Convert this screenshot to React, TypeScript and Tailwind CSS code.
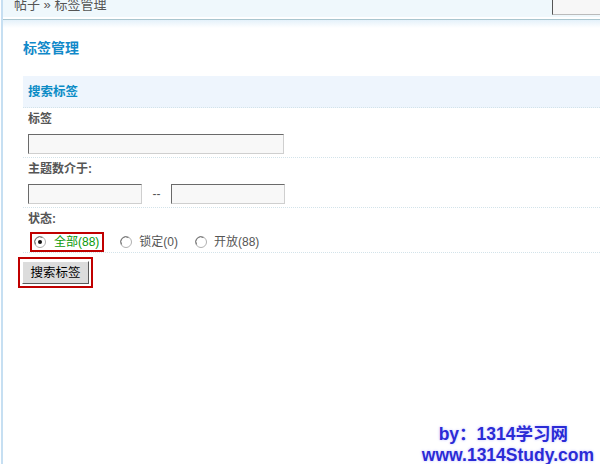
const Radio = ({ checked }: { checked?: boolean }) => (
  <svg width="12" height="12" viewBox="0 0 12 12" className="shrink-0">
    <circle cx="6" cy="6" r="5.5" fill="#fff" stroke="#b0b0b0" />
    <path d="M1.6 8.5 A5 5 0 0 1 8.5 1.6" fill="none" stroke="#707070" strokeWidth="1" />
    {checked && <circle cx="6" cy="6" r="2" fill="#111" />}
  </svg>
);

const inputCls =
  "h-[20px] bg-[#f8f8f8] border border-t-[#6a6a6a] border-l-[#6a6a6a] border-b-[#cfcfcf] border-r-[#cfcfcf] outline-none";

export default function App() {
  return (
    <div
      className="relative flex h-[464px] w-[600px] overflow-hidden bg-white text-[12px] leading-4 text-[#555]"
      style={{ fontFamily: '"Liberation Sans", "Noto Sans CJK SC", sans-serif' }}
    >
      <div className="w-px shrink-0" />
      <div className="w-[2px] shrink-0 bg-[#c6dff2]" />

      <div className="flex min-w-0 flex-1 flex-col">
        {/* top bar */}
        <div className="flex h-[17px] items-start justify-between bg-[#eff8fc]">
          <span className="-mt-[3px] ml-[11px] text-[13px] text-[#555]">帖子 » 标签管理</span>
          <div className="h-[15px] w-[48px] border-l border-b border-l-[#555] border-b-[#bbb] bg-[#f7f7f7]" />
        </div>
        <div className="h-[2px] bg-white" />
        <div className="h-px bg-[#a9c6cf]" />
        <div className="h-[8px] bg-gradient-to-b from-[#e4f1fa] to-white" />

        <div className="pl-[20px]">
          <h1 className="mt-[10px] text-[14px] font-bold leading-5 text-[#1189c9]">标签管理</h1>

          <div className="mt-[18px] flex h-[32px] items-center border-b border-dotted border-[#d3e3ea] bg-[#eef5fd] pl-[5px]">
            <span className="text-[12.5px] font-bold text-[#0b8cc6]">搜索标签</span>
          </div>

          <div className="border-b border-dotted border-[#d3e3ea] pl-[5px] pt-[3px] pb-[3px]">
            <div className="font-bold">标签</div>
            <input className={`mt-[7px] block w-[256px] ${inputCls}`} />
          </div>

          <div className="border-b border-dotted border-[#d3e3ea] pl-[5px] pt-[3px] pb-[3px]">
            <div className="font-bold">主题数介于:</div>
            <div className="mt-[7px] flex items-center">
              <input className={`w-[114px] ${inputCls}`} />
              <span className="mx-[10px] w-[9px] text-center">--</span>
              <input className={`w-[114px] ${inputCls}`} />
            </div>
          </div>

          <div className="border-b border-dotted border-[#d3e3ea] pl-[5px] pt-[3px]">
            <div className="font-bold">状态:</div>
            <div className="mt-[5px] flex h-[20px] items-center">
              <div className="ml-[2px] flex h-[20px] items-center border-2 border-[#c00000] pl-[2px] pr-[3px]">
                <Radio checked />
                <span className="ml-[8px] text-[#0a9a0a]">全部(88)</span>
              </div>
              <div className="ml-[16px] flex items-center">
                <Radio />
                <span className="ml-[7px]">锁定(0)</span>
              </div>
              <div className="ml-[17px] flex items-center">
                <Radio />
                <span className="ml-[7px]">开放(88)</span>
              </div>
            </div>
          </div>

          <div className="-ml-[5px] mt-[4px] inline-block border-2 border-[#c00000] p-[2px]">
            <button className="block h-[23px] w-[67px] border border-t-white border-l-white border-b-[#5a5a5a] border-r-[#5a5a5a] bg-[#dcdcdc] text-[12.5px] text-black">
              搜索标签
            </button>
          </div>
        </div>
      </div>

      {/* watermark */}
      <div
        className="pointer-events-none absolute right-[6px] bottom-[-2px] flex flex-col items-end text-[17.5px] font-bold leading-[21px] text-[#2b2bd6] [text-shadow:0_0_2px_#e8e8ff,0_0_3px_#c9c9ff]"
        style={{ fontFamily: '"Liberation Sans", "Noto Sans CJK SC", sans-serif' }}
      >
        <span className="mr-[26px]">by：1314学习网</span>
        <span>www.1314Study.com</span>
      </div>
    </div>
  );
}
